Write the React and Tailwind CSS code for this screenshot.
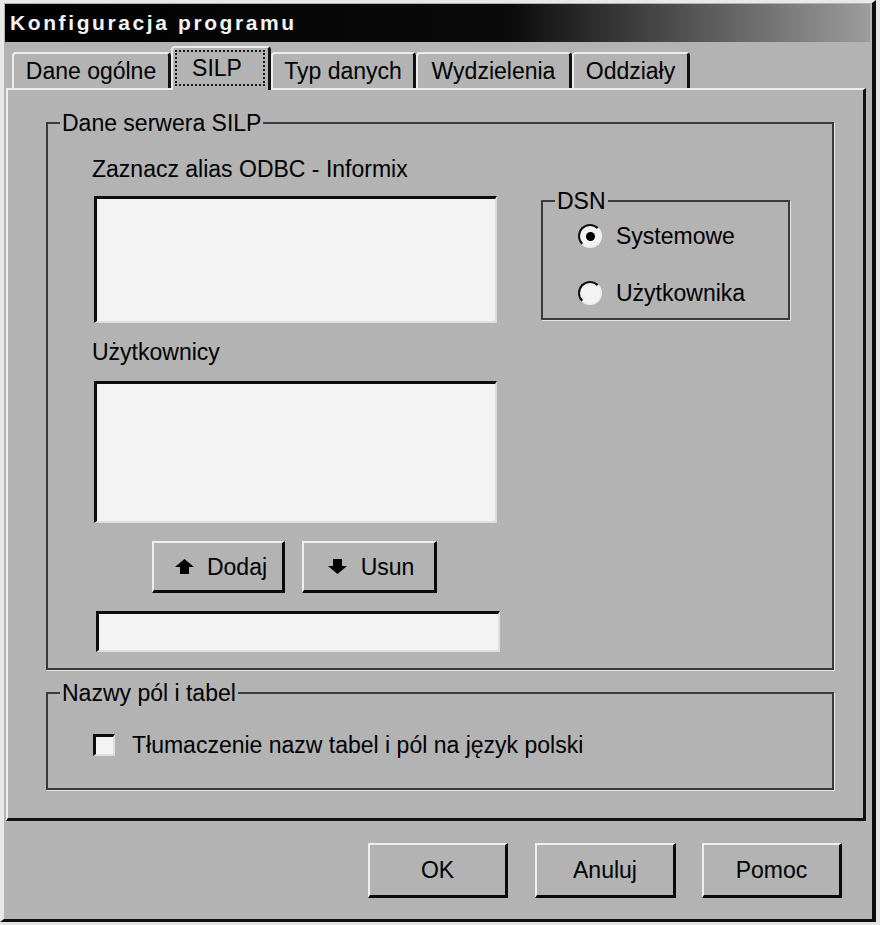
import React from "react";

const tabs = [
  { label: "Dane ogólne", width: "w-[159px]" },
  { label: "SILP", width: "w-[100px]", active: true },
  { label: "Typ danych", width: "w-[145px]" },
  { label: "Wydzielenia", width: "w-[156px]" },
  { label: "Oddziały", width: "w-[118px]" },
];

function Tab({ label, width, active }) {
  if (active) {
    return (
      <div
        className={`${width} relative z-10 -mb-[2px] flex h-[44px] flex-col rounded-t-[4px] border-t-2 border-l-2 border-r-[3px] border-t-[#ececec] border-l-[#ececec] border-r-[#111] bg-[#b3b3b3]`}
      >
        <div className="mt-[2px] ml-[2px] flex h-[36px] w-[90px] items-center justify-center border-2 border-dotted border-[#1a1a1a] pr-[6px]">
          {label}
        </div>
      </div>
    );
  }
  return (
    <div
      className={`${width} flex h-[36px] items-center justify-center rounded-t-[4px] border-t-2 border-l-2 border-r-[3px] border-t-[#ececec] border-l-[#ececec] border-r-[#111]`}
    >
      {label}
    </div>
  );
}

function Group({ label, className = "", children }) {
  return (
    <fieldset
      className={`border-2 border-[#3a3a3a] shadow-[1px_1px_0_#e4e4e4] ${className}`}
    >
      <legend className="ml-[12px] px-[2px] leading-[26px]">{label}</legend>
      {children}
    </fieldset>
  );
}

function Sunken({ className = "" }) {
  return (
    <div
      className={`border-t-[3px] border-l-[3px] border-r-2 border-b-2 border-t-[#0c0c0c] border-l-[#0c0c0c] border-r-[#dedede] border-b-[#dedede] bg-[#f3f3f3] ${className}`}
    />
  );
}

function Button({ className = "", children }) {
  return (
    <button
      className={`flex items-center justify-center border-t-2 border-l-2 border-r-[3px] border-b-[3px] border-t-[#efefef] border-l-[#efefef] border-r-[#0a0a0a] border-b-[#0a0a0a] bg-[#b3b3b3] text-[23px] leading-[26px] text-black ${className}`}
    >
      {children}
    </button>
  );
}

function Radio({ label, checked, className = "" }) {
  return (
    <div className={`flex h-[26px] items-center gap-[14px] ${className}`}>
      <span className="flex h-[24px] w-[24px] items-center justify-center rounded-full border-2 border-t-[#111] border-l-[#111] border-r-[#efefef] border-b-[#efefef] bg-[#f3f3f3]">
        {checked && <span className="h-[9px] w-[9px] rounded-full bg-black" />}
      </span>
      <span>{label}</span>
    </div>
  );
}

function ArrowUp() {
  return (
    <svg width="19" height="15" viewBox="0 0 19 15">
      <polygon points="9.5,0 19,8 14,8 14,15 5,15 5,8 0,8" fill="#000" />
    </svg>
  );
}

function ArrowDown() {
  return (
    <svg width="19" height="15" viewBox="0 0 19 15">
      <polygon points="5,0 14,0 14,7 19,7 9.5,15 0,7 5,7" fill="#000" />
    </svg>
  );
}

export default function App() {
  return (
    <div className="h-[925px] w-[880px] bg-[#e4e4e4] font-['Liberation_Sans',Arial,sans-serif] text-[23px] leading-[26px] text-black">
      <div className="flex h-[922px] w-[876px] flex-col border-t-[3px] border-l-[4px] border-r-[4px] border-b-[3px] border-t-[#e8e8e8] border-l-[#e8e8e8] border-r-[#0e0e0e] border-b-[#0e0e0e] bg-[#b3b3b3]">
        {/* title bar */}
        <div className="mt-[1px] ml-[1px] flex h-[38px] w-[865px] items-center bg-[linear-gradient(to_right,#000_0%,#0a0a0a_58%,#9c9c9c_100%)] pl-[5px]">
          <span className="text-[21px] font-bold tracking-[2.6px] text-[#f4f4f4]">
            Konfiguracja programu
          </span>
        </div>

        {/* tabs */}
        <div className="flex h-[46px] items-end pl-[8px]">
          {tabs.map((t) => (
            <Tab key={t.label} {...t} />
          ))}
        </div>

        {/* tab page */}
        <div className="ml-[2px] flex h-[733px] w-[860px] flex-col border-t-2 border-l-2 border-r-[3px] border-b-[3px] border-t-[#ececec] border-l-[#ececec] border-r-[#111] border-b-[#111]">
          <Group label="Dane serwera SILP" className="mt-[20px] ml-[38px] w-[788px]">
            <div className="flex items-start pl-[44px] pb-[16px]">
              <div className="flex w-[408px] flex-col">
                <div className="mt-[20px]">Zaznacz alias ODBC - Informix</div>
                <Sunken className="mt-[14px] ml-[2px] h-[127px] w-[403px]" />
                <div className="mt-[16px]">Użytkownicy</div>
                <Sunken className="mt-[16px] ml-[2px] h-[142px] w-[403px]" />
                <div className="mt-[18px] ml-[60px] flex gap-[17px]">
                  <Button className="h-[52px] w-[133px] gap-[13px] pl-[6px]">
                    <ArrowUp />
                    <span>Dodaj</span>
                  </Button>
                  <Button className="h-[52px] w-[135px] gap-[14px] pl-[4px]">
                    <ArrowDown />
                    <span>Usun</span>
                  </Button>
                </div>
                <Sunken className="mt-[18px] ml-[4px] h-[41px] w-[404px]" />
              </div>

              <Group label="DSN" className="mt-[52px] ml-[41px] w-[249px]">
                <div className="flex flex-col pl-[35px] pb-[12px]">
                  <Radio label="Systemowe" checked className="mt-[9px]" />
                  <Radio label="Użytkownika" className="mt-[31px]" />
                </div>
              </Group>
            </div>
          </Group>

          <Group label="Nazwy pól i tabel" className="mt-[10px] ml-[38px] w-[788px]">
            <div className="flex h-[26px] items-center gap-[17px] pl-[45px] mt-[26px] mb-[30px]">
              <span className="h-[22px] w-[22px] border-t-[3px] border-l-[3px] border-r-2 border-b-2 border-t-[#0c0c0c] border-l-[#0c0c0c] border-r-[#dedede] border-b-[#dedede] bg-[#f3f3f3]" />
              <span>Tłumaczenie nazw tabel i pól na język polski</span>
            </div>
          </Group>
        </div>

        {/* dialog buttons */}
        <div className="mt-[22px] flex justify-end pr-[30px]">
          <Button className="h-[55px] w-[140px]">OK</Button>
          <Button className="ml-[27px] h-[55px] w-[141px]">Anuluj</Button>
          <Button className="ml-[26px] h-[55px] w-[140px]">Pomoc</Button>
        </div>
      </div>
    </div>
  );
}
